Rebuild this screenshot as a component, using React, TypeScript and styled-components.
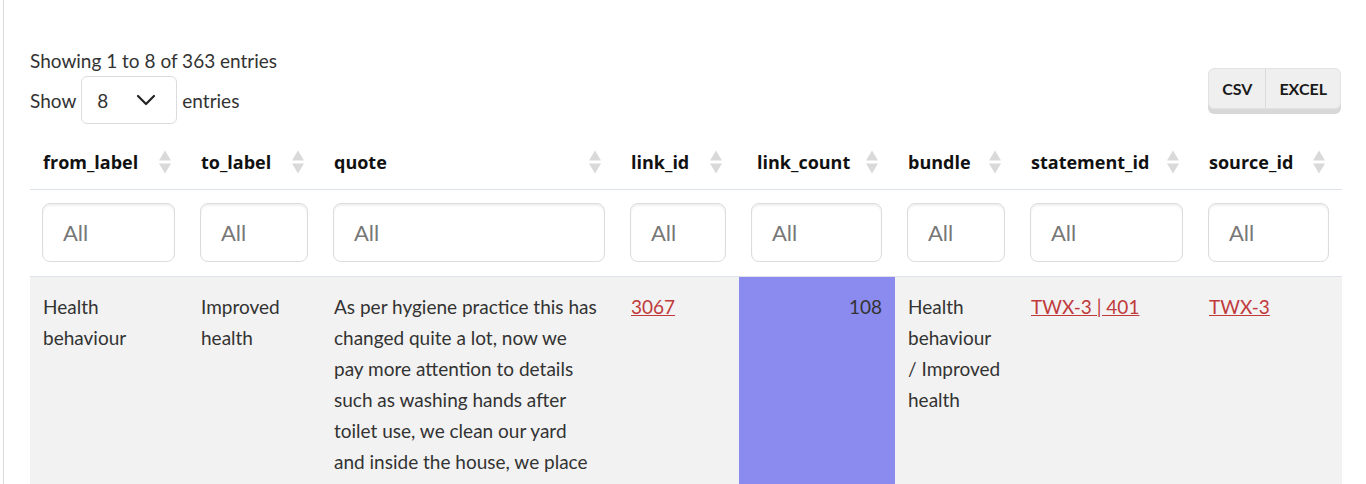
import React from "react";
import styled, { createGlobalStyle } from "styled-components";

const GlobalStyle = createGlobalStyle`
  body {
    margin: 0;
    background: #ffffff;
    font-family: Lato, "Noto Sans", sans-serif;
    color: #333333;
  }
`;

const Page = styled.div`
  margin-left: 3px;
  border-left: 1px solid #d9d9d9;
  padding: 49px 24px 0 26px;
  height: 435px;
  overflow: hidden;
`;

const TopBar = styled.div`
  display: flex;
  justify-content: space-between;
  align-items: flex-start;
`;

const Info = styled.div`
  font-size: 19px;
  line-height: 24px;
  color: #333;
`;

const LengthRow = styled.div`
  display: flex;
  align-items: center;
  gap: 5px;
  margin-top: 3px;
  font-size: 19px;
  color: #333;
`;

const Select = styled.div`
  width: 96px;
  height: 48px;
  box-sizing: border-box;
  border: 1px solid #dcdcdc;
  border-radius: 6px;
  display: flex;
  align-items: center;
  justify-content: space-between;
  padding: 0 20px 0 15px;
  font-size: 19px;
  color: #333;
`;

const ButtonGroup = styled.div`
  display: flex;
  margin-top: 19px;
  margin-right: 1px;
  background: #efefef;
  border: 1px solid #e2e2e2;
  border-radius: 6px;
  box-shadow: 0 5px 0 #d8d8d8;
`;

const ExportButton = styled.div<{ $divider?: boolean }>`
  padding: 0 13px;
  height: 39px;
  display: flex;
  align-items: center;
  font-size: 16px;
  font-weight: 700;
  color: #1a1a1a;
  border-left: ${p => (p.$divider ? "1px solid #dadada" : "none")};
`;

const Table = styled.table`
  margin-top: 11px;
  width: 1312px;
  table-layout: fixed;
  border-collapse: collapse;
`;

const HeadCell = styled.th<{ $pl?: number }>`
  position: relative;
  height: 54px;
  padding: 0 30px 0 ${p => p.$pl ?? 13}px;
  text-align: left;
  font-family: "Open Sans", Lato, sans-serif;
  font-size: 18px;
  font-weight: 700;
  color: #111;
  border-bottom: 1px solid #dde2ea;
  white-space: nowrap;
`;

const SortIcon = styled.span`
  position: absolute;
  right: 17px;
  top: 50%;
  transform: translateY(-50%);
  display: flex;
  flex-direction: column;
  gap: 3px;
  &::before,
  &::after {
    content: "";
    border-left: 6px solid transparent;
    border-right: 6px solid transparent;
  }
  &::before {
    border-bottom: 10px solid #d9d9d9;
  }
  &::after {
    border-top: 10px solid #d9d9d9;
  }
`;

const FilterCell = styled.td`
  padding: 13px 13px 14px 12px;
`;

const FilterInput = styled.div`
  height: 59px;
  box-sizing: border-box;
  border: 1px solid #dcdcdc;
  border-radius: 8px;
  box-shadow: inset 0 2px 2px rgba(0, 0, 0, 0.06);
  padding-left: 20px;
  display: flex;
  align-items: center;
  font-size: 22px;
  color: #777;
`;

const Row = styled.tr`
  background: #f2f2f2;
  border-top: 1px solid #dde2ea;
`;

const Cell = styled.td<{ $highlight?: boolean; $right?: boolean }>`
  vertical-align: top;
  padding: 14px 13px 0 13px;
  height: 200px;
  font-size: 19px;
  line-height: 31px;
  color: #333;
  background: ${p => (p.$highlight ? "#8b8bef" : "transparent")};
  text-align: ${p => (p.$right ? "right" : "left")};
`;

const Line = styled.span`
  display: block;
  white-space: nowrap;
`;

const Link = styled.a`
  color: #c0393b;
  text-decoration: underline;
`;

const columns = [
  { name: "from_label", width: 158 },
  { name: "to_label", width: 133 },
  { name: "quote", width: 297 },
  { name: "link_id", width: 121 },
  { name: "link_count", width: 156, pl: 18 },
  { name: "bundle", width: 123 },
  { name: "statement_id", width: 178 },
  { name: "source_id", width: 146 }
];

const quoteLines = [
  "As per hygiene practice this has",
  "changed quite a lot, now we",
  "pay more attention to details",
  "such as washing hands after",
  "toilet use, we clean our yard",
  "and inside the house, we place",
  "our shoes outside the house"
];

const bundleLines = ["Health", "behaviour", "/ Improved", "health"];

const Chevron = () => (
  <svg width="20" height="12" viewBox="0 0 20 12" fill="none">
    <path d="M2 2l8 8 8-8" stroke="#222" strokeWidth="2.2" strokeLinecap="round" strokeLinejoin="round" />
  </svg>
);

const App: React.FC = () => {
  return (
    <>
      <GlobalStyle />
      <Page>
        <TopBar>
          <div>
            <Info>Showing 1 to 8 of 363 entries</Info>
            <LengthRow>
              Show
              <Select>
                <span>8</span>
                <Chevron />
              </Select>
              entries
            </LengthRow>
          </div>
          <ButtonGroup>
            <ExportButton>CSV</ExportButton>
            <ExportButton $divider>EXCEL</ExportButton>
          </ButtonGroup>
        </TopBar>

        <Table>
          <colgroup>
            {columns.map(c => (
              <col key={c.name} style={{ width: c.width }} />
            ))}
          </colgroup>
          <thead>
            <tr>
              {columns.map(c => (
                <HeadCell key={c.name} $pl={c.pl}>
                  {c.name}
                  <SortIcon />
                </HeadCell>
              ))}
            </tr>
            <tr>
              {columns.map(c => (
                <FilterCell key={c.name}>
                  <FilterInput>All</FilterInput>
                </FilterCell>
              ))}
            </tr>
          </thead>
          <tbody>
            <Row>
              <Cell>Health behaviour</Cell>
              <Cell>Improved health</Cell>
              <Cell>
                {quoteLines.map(l => (
                  <Line key={l}>{l}</Line>
                ))}
              </Cell>
              <Cell>
                <Link href="#">3067</Link>
              </Cell>
              <Cell $highlight $right>
                108
              </Cell>
              <Cell>
                {bundleLines.map(l => (
                  <Line key={l}>{l}</Line>
                ))}
              </Cell>
              <Cell>
                <Link href="#">TWX-3 | 401</Link>
              </Cell>
              <Cell>
                <Link href="#">TWX-3</Link>
              </Cell>
            </Row>
          </tbody>
        </Table>
      </Page>
    </>
  );
};

export default App;
